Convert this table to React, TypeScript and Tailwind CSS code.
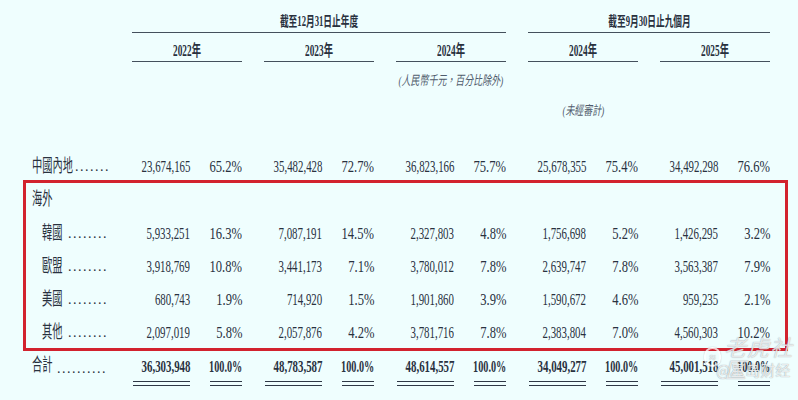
import { ReactNode } from "react";

const FONT = "font-['Liberation_Serif','Noto_Sans_CJK_TC',serif]";

type Pair = [string, string];

const Squeeze = ({
  children,
  className,
}: {
  children: ReactNode;
  className: string;
}) => (
  <span className={`inline-block whitespace-nowrap ${className}`}>
    {children}
  </span>
);

const Dots = ({ n }: { n: number }) => (
  <span className="text-[14px] leading-none tracking-[1.5px] whitespace-nowrap">
    {".".repeat(n)}
  </span>
);

interface IRow {
  label: string;
  labelW: string;
  colW: string;
  pad: string;
  dots: number;
  dotsGap: string;
  vals?: Pair[];
  h: string;
}

const DataRow = ({ label, labelW, colW, pad, dots, dotsGap, vals, h }: IRow) => (
  <div className={`flex items-center ${h}`}>
    <div className={`flex items-end shrink-0 ${colW} ${pad}`}>
      <div className={`shrink-0 ${labelW}`}>
        <Squeeze className="origin-left scale-x-[0.57] text-[18px] leading-none">
          {label}
        </Squeeze>
      </div>
      {dots > 0 && (
        <div className={`pb-[1px] ${dotsGap}`}>
          <Dots n={dots} />
        </div>
      )}
    </div>
    {vals && (
      <div className="flex gap-[22px]">
        {vals.map(([num, pct], i) => (
          <div key={i} className="flex">
            <div className="flex justify-end w-[58px]">
              <Squeeze className="origin-right scale-x-[0.64] text-[17px] leading-none">
                {num}
              </Squeeze>
            </div>
            <div className="flex justify-end w-[52px]">
              <Squeeze className="origin-right scale-x-[0.74] text-[17px] leading-none">
                {pct}
              </Squeeze>
            </div>
          </div>
        ))}
      </div>
    )}
  </div>
);

const overseas: { label: string; dots: number; vals: Pair[] }[] = [
  {
    label: "韓國",
    dots: 8,
    vals: [
      ["5,933,251", "16.3%"],
      ["7,087,191", "14.5%"],
      ["2,327,803", "4.8%"],
      ["1,756,698", "5.2%"],
      ["1,426,295", "3.2%"],
    ],
  },
  {
    label: "歐盟",
    dots: 8,
    vals: [
      ["3,918,769", "10.8%"],
      ["3,441,173", "7.1%"],
      ["3,780,012", "7.8%"],
      ["2,639,747", "7.8%"],
      ["3,563,387", "7.9%"],
    ],
  },
  {
    label: "美國",
    dots: 8,
    vals: [
      ["680,743", "1.9%"],
      ["714,920", "1.5%"],
      ["1,901,860", "3.9%"],
      ["1,590,672", "4.6%"],
      ["959,235", "2.1%"],
    ],
  },
  {
    label: "其他",
    dots: 8,
    vals: [
      ["2,097,019", "5.8%"],
      ["2,057,876", "4.2%"],
      ["3,781,716", "7.8%"],
      ["2,383,804", "7.0%"],
      ["4,560,303", "10.2%"],
    ],
  },
];

const totals: Pair[] = [
  ["36,303,948", "100.0%"],
  ["48,783,587", "100.0%"],
  ["48,614,557", "100.0%"],
  ["34,049,277", "100.0%"],
  ["45,001,518", "100.0%"],
];

const years = ["2022年", "2023年", "2024年", "2024年", "2025年"];

export default function App() {
  return (
    <div
      className={`relative w-[798px] h-[400px] overflow-hidden bg-[#effefe] text-[#29313e] ${FONT}`}
    >
      {/* period headers */}
      <div className="flex gap-[22px] pl-[132px] pt-[11px]">
        <div className="w-[374px] h-[22px] flex items-center justify-center border-b-[1.5px] border-[#44505c] font-bold">
          <Squeeze className="origin-center scale-x-[0.62] text-[14px] leading-none">
            截至12月31日止年度
          </Squeeze>
        </div>
        <div className="w-[242px] h-[22px] flex items-center justify-center border-b-[1.5px] border-[#44505c] font-bold">
          <Squeeze className="origin-center scale-x-[0.62] text-[14px] leading-none">
            截至9月30日止九個月
          </Squeeze>
        </div>
      </div>

      {/* years */}
      <div className="flex gap-[22px] pl-[132px] mt-[7px]">
        {years.map((y, i) => (
          <div
            key={i}
            className="w-[110px] h-[22px] flex items-center justify-center border-b-[1.5px] border-[#44505c] font-bold"
          >
            <Squeeze className="origin-center scale-x-[0.58] text-[16px] leading-none">
              {y}
            </Squeeze>
          </div>
        ))}
      </div>

      {/* notes */}
      <div className="flex pl-[396px] h-[36px] items-center">
        <div className="w-[110px] flex justify-center text-[#4f5c6d] italic">
          <Squeeze className="origin-center scale-x-[0.69] text-[13px] leading-none">
            (人民幣千元，百分比除外)
          </Squeeze>
        </div>
      </div>
      <div className="flex pl-[528px] h-[24px] items-center">
        <div className="w-[110px] flex justify-center text-[#4f5c6d] italic">
          <Squeeze className="origin-center scale-x-[0.69] text-[13px] leading-none">
            (未經審計)
          </Squeeze>
        </div>
      </div>

      {/* mainland */}
      <div className="mt-[31px]">
        <DataRow
          label="中國內地"
          labelW="w-[42px]"
          colW="w-[132px]"
          pad="pl-[32px]"
          dots={7}
          dotsGap="ml-[1px]"
          h="h-[26px]"
          vals={[
            ["23,674,165", "65.2%"],
            ["35,482,428", "72.7%"],
            ["36,823,166", "75.7%"],
            ["25,678,355", "75.4%"],
            ["34,492,298", "76.6%"],
          ]}
        />
      </div>

      {/* overseas, boxed */}
      <div className="ml-[23px] mt-[1px] w-[765px] border-[3px] border-[#d2222e]">
        <DataRow
          label="海外"
          labelW="w-[21px]"
          colW="w-[106px]"
          pad="pl-[6px]"
          dots={0}
          dotsGap=""
          h="h-[34px]"
        />
        {overseas.map((r, i) => (
          <DataRow
            key={r.label}
            label={r.label}
            labelW="w-[21px]"
            colW="w-[106px]"
            pad="pl-[16px]"
            dots={r.dots}
            dotsGap="ml-[5px]"
            h={i === overseas.length - 1 ? "h-[32px]" : "h-[33px]"}
            vals={r.vals}
          />
        ))}
      </div>

      {/* total */}
      <div className="flex items-start mt-[2px] font-bold">
        <div className="flex items-center w-[132px] pl-[32px] h-[26px] font-normal">
          <div className="w-[21px] shrink-0">
            <Squeeze className="origin-left scale-x-[0.57] text-[18px] leading-none">
              合計
            </Squeeze>
          </div>
          <div className="ml-[4px] pt-[4px]">
            <Dots n={10} />
          </div>
        </div>
        <div className="flex gap-[22px]">
          {totals.map(([num, pct], i) => (
            <div key={i} className="flex">
              <div className="flex flex-col items-end w-[58px]">
                <div className="h-[26px] flex items-center justify-end w-full">
                  <Squeeze className="origin-right scale-x-[0.64] text-[17px] leading-none">
                    {num}
                  </Squeeze>
                </div>
                <div className="mt-[2px] w-[57px] h-[5px] border-y border-[#2f3846]" />
              </div>
              <div className="flex flex-col items-end w-[52px]">
                <div className="h-[26px] flex items-center justify-end w-full">
                  <Squeeze className="origin-right scale-x-[0.6] text-[17px] leading-none">
                    {pct}
                  </Squeeze>
                </div>
                <div className="mt-[2px] w-[32px] h-[5px] border-y border-[#2f3846]" />
              </div>
            </div>
          ))}
        </div>
      </div>

      {/* watermark */}
      <div className="absolute left-[704px] top-[335px] flex items-center gap-[3px] text-white/75 [text-shadow:0_0_1px_rgba(60,70,80,0.55)] pointer-events-none">
        <span className="w-[20px] h-[20px] rounded-full border-2 border-white/75 shadow-[0_0_1px_rgba(60,70,80,0.55)] flex items-center justify-center text-[11px] leading-none font-bold">
          ≈
        </span>
        <span className="text-[22px] leading-none font-['Noto_Sans_CJK_SC',sans-serif] italic tracking-[1px]">
          老虎社区
        </span>
      </div>
      <div className="absolute left-[716px] top-[362px] text-white/80 [text-shadow:0_0_1px_rgba(60,70,80,0.65)] text-[15px] leading-none font-['Noto_Sans_CJK_SC',sans-serif] pointer-events-none">
        @星岛财经
      </div>
    </div>
  );
}
